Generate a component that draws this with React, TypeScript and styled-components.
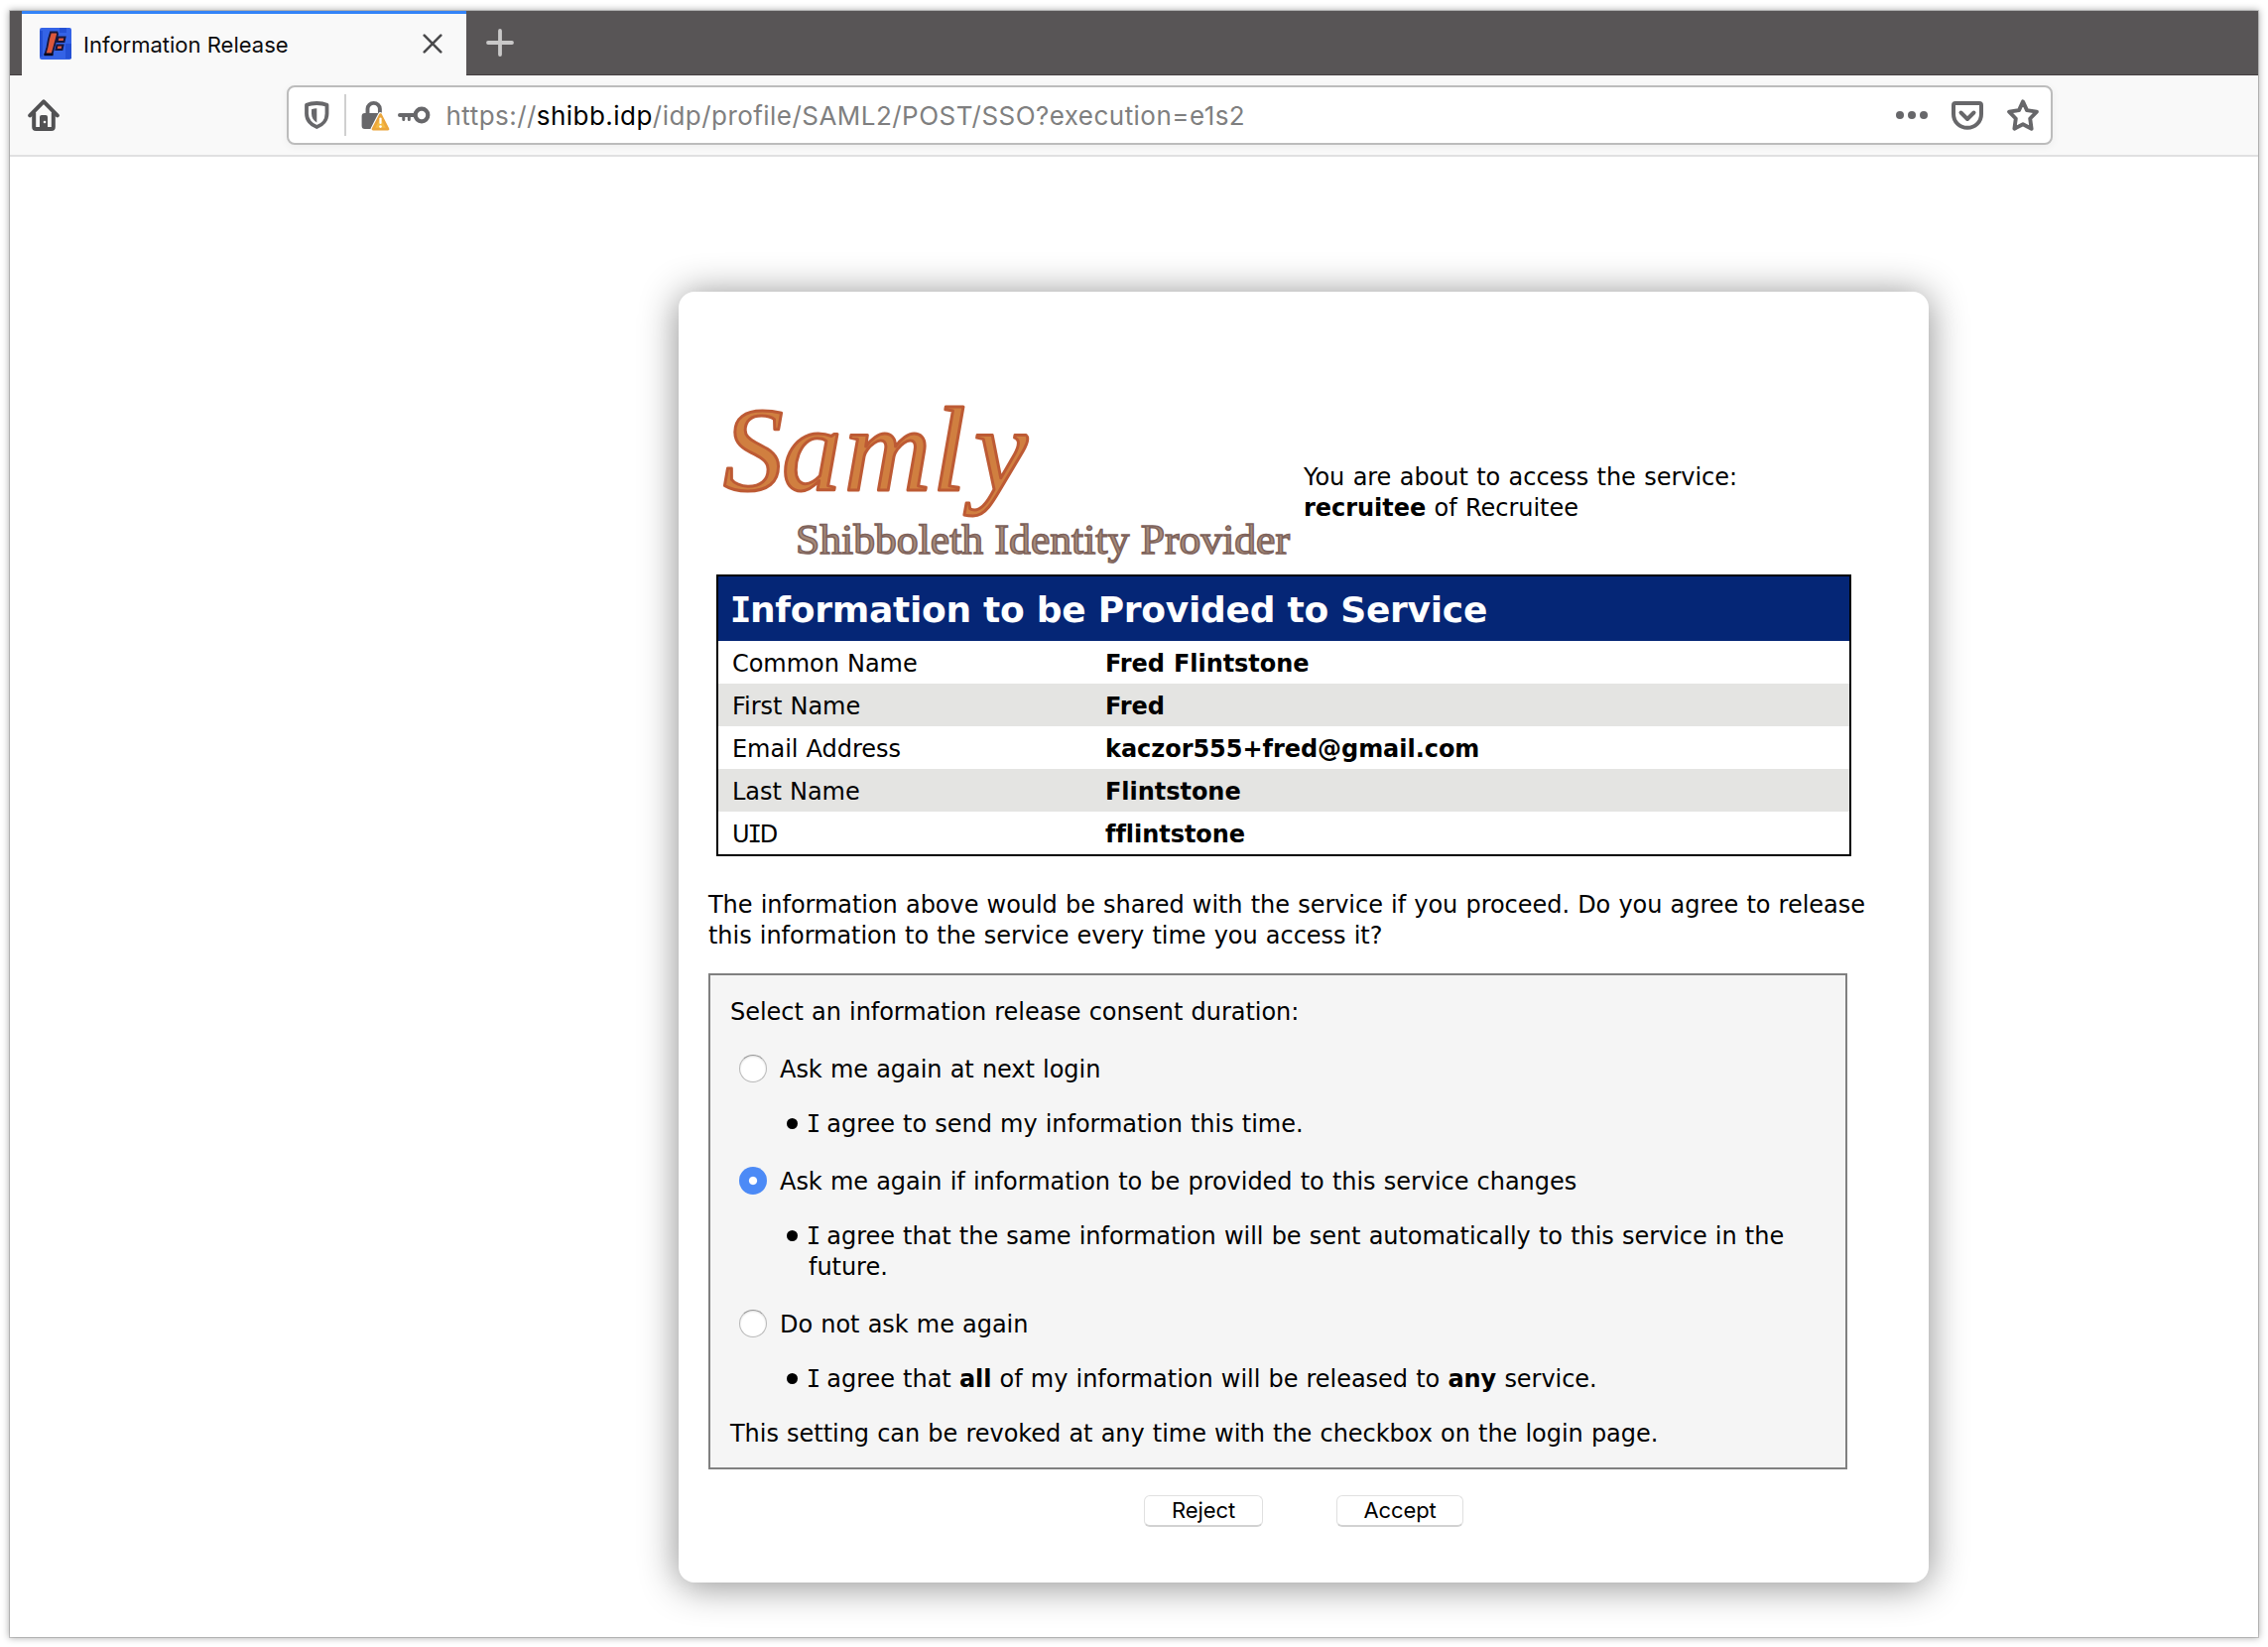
import React, { useState } from "react";
import styled, { createGlobalStyle } from "styled-components";

const GlobalStyle = createGlobalStyle`
  *, *::before, *::after { box-sizing: border-box; }
  body { margin: 0; background: #fff; }
`;

const uiFont = `Inter, "Liberation Sans", sans-serif`;
const pageFont = `"DejaVu Sans", Verdana, sans-serif`;

const Desktop = styled.div`
  padding: 11px 10px 10px;
  background: #fff;
`;

const BrowserWindow = styled.div`
  height: 1639px;
  display: flex;
  flex-direction: column;
  background: #fff;
  box-shadow: 0 0 0 1px rgba(0, 0, 0, 0.16), 0 0 7px 1px rgba(0, 0, 0, 0.32);
`;

const TabStrip = styled.div`
  display: flex;
  height: 65px;
  padding-left: 12px;
  background: #585556;
  box-shadow: inset 0 -1px 0 #453f41;
`;

const Tab = styled.div`
  display: flex;
  align-items: center;
  width: 448px;
  padding: 0 24px 2px 18px;
  border-top: 3px solid #3484f8;
  background: #f9f9f9;
`;

const TabTitle = styled.span`
  flex: 1;
  margin-left: 12px;
  padding-top: 2px;
  font: 400 22px/28px ${uiFont};
  color: #0c0c0d;
`;

const IconButton = styled.button`
  display: flex;
  padding: 0;
  border: 0;
  background: none;
  color: #5b5b5d;
`;

const NewTabButton = styled(IconButton)`
  align-self: center;
  margin: -1px 0 0 20px;
  color: #c9c8c8;
`;

const Toolbar = styled.div`
  display: flex;
  align-items: flex-start;
  height: 82px;
  padding: 10px 0 0 18px;
  border-bottom: 2px solid #e0e0e1;
  background: #f9f9f9;
`;

const HomeButton = styled(IconButton)`
  margin: 14px 229px 0 0;
  color: #515153;
`;

const AddressBar = styled.div`
  display: flex;
  align-items: center;
  width: 1780px;
  height: 60px;
  padding: 0 12px 0 16px;
  border: 2px solid #bcbcbc;
  border-radius: 8px;
  background: #fff;
  color: #67676a;
  box-shadow: 0 2px 8px rgba(0, 0, 0, 0.05);
`;

const Divider = styled.span`
  width: 2px;
  height: 42px;
  margin: 0 15px;
  background: #d0d0d0;
`;

const Url = styled.span`
  flex: 1;
  margin-left: 15.5px;
  padding-top: 2px;
  font: 400 26px/32px ${uiFont};
  letter-spacing: 0.46px;
  color: #7f7f80;
`;

const UrlHost = styled.span`
  color: #000;
`;

const PageActions = styled.div`
  display: flex;
  align-items: center;
  gap: 24px;
`;

const Page = styled.main`
  flex: 1;
  padding: 136px 0 0 674px;
`;

const Card = styled.section`
  width: 1260px;
  height: 1301px;
  padding: 86px 30px 0;
  border-radius: 16px;
  background: #fff;
  box-shadow: 0 3px 38px rgba(0, 0, 0, 0.46);
  font: 400 24px/31px ${pageFont};
  letter-spacing: -0.04px;
  word-spacing: 0.6px;
  color: #000;
`;

const CardHeader = styled.header`
  display: flex;
  align-items: flex-start;
  height: 199px;
  padding-left: 8px;
`;

const Service = styled.p`
  margin: 86px 0 0 8px;
  word-spacing: 0.8px;
`;

const AttributeTable = styled.div`
  width: 1144px;
  margin-left: 8px;
  border: 2px solid #000;
`;

const TableTitle = styled.h2`
  height: 65px;
  margin: 0;
  padding: 13px 13px 0;
  background: #052676;
  font-size: 36px;
  line-height: 42px;
  letter-spacing: -0.26px;
  word-spacing: 0;
  color: #fff;
`;

const AttributeRow = styled.div`
  display: grid;
  grid-template-columns: 376px 1fr;
  height: 43px;
  padding: 8px 13px 0 14px;

  &:nth-child(odd) {
    background: #e4e4e2;
  }
`;

const Capital = styled.span`
  margin: 0 -0.09em;
  font-family: "DejaVu Sans Mono", monospace;

  h2 & {
    margin: 0 -0.035em;
  }
`;

const Question = styled.p`
  width: 1190px;
  margin: 34px 0 22px;
`;

const ConsentBox = styled.div`
  width: 1148px;
  padding: 22px 20px 18px;
  border: 2px solid #808080;
  background: #f5f5f5;
`;

const Line = styled.p`
  margin: 0;
`;

const Option = styled.label`
  display: flex;
  margin: 27px 0 0 9px;
`;

const Radio = styled.input`
  appearance: none;
  width: 28px;
  height: 28px;
  margin: 0 13px 0 0;
  border: 1px solid #b9b9b9;
  border-top-color: #979797;
  border-radius: 50%;
  background: #fff;
  box-shadow: inset 0 1px 2px rgba(0, 0, 0, 0.12);

  &:checked {
    border: 0;
    background: radial-gradient(circle, #fff 3.6px, #4c8af6 4.6px);
    box-shadow: none;
  }
`;

const Notes = styled.ul`
  margin: 24px 0;
  padding: 0;
  list-style: none;
`;

const Note = styled.li`
  display: flex;
  width: 1090px;
  padding-left: 57px;

  &::before {
    content: "";
    flex: none;
    width: 11px;
    height: 11px;
    margin: 9px 11px 0 0;
    border-radius: 50%;
    background: #000;
  }
`;

const Actions = styled.div`
  display: flex;
  gap: 74px;
  margin: 26px 0 0 439px;
`;

const ActionButton = styled.button<{ $width: number }>`
  width: ${(p) => p.$width}px;
  height: 32px;
  padding: 0 0 1px;
  border: 1px solid #e0e0e0;
  border-bottom: 2px solid #d2d2d2;
  border-radius: 6px;
  background: #fff;
  font: 400 22px/28px ${uiFont};
  letter-spacing: -0.1px;
  color: #000;
`;

const Favicon = () => (
  <svg width="32" height="32" viewBox="0 0 32 32">
    <rect width="32" height="32" rx="2" fill="#3463e6" />
    <path d="M0 3h3v26H0zM26 16h6v15h-6zM20 0h7v5h-7z" fill="#2450d4" />
    <path
      d="M18.500 9.500h7l-1 4.500h-7zM17.500 17.500h6l-1 4.500h-6z"
      fill="#db573b"
      stroke="#16163c"
      strokeWidth="2"
    />
    <path d="M11 4.500h6.500l.5 2-5.500 20H5.500l2-7 1.500-8z" fill="#db573b" stroke="#16163c" strokeWidth="1.800" />
    <path d="M4.500 27h9" stroke="#08081c" strokeWidth="2.400" />
  </svg>
);

const CloseIcon = () => (
  <svg width="20" height="20" viewBox="0 0 20 20" fill="none" stroke="#4a4a4c" strokeWidth="2.6" strokeLinecap="round">
    <path d="M1.7 1.7l16.6 16.6M18.3 1.7L1.7 18.3" />
  </svg>
);

const PlusIcon = () => (
  <svg width="28" height="28" viewBox="0 0 28 28" fill="none" stroke="currentColor" strokeWidth="3.8" strokeLinecap="round">
    <path d="M14 2v24M2 14h24" />
  </svg>
);

const HomeIcon = () => (
  <svg width="32" height="32" viewBox="0 0 32 32" fill="none" stroke="currentColor" strokeWidth="4" strokeLinecap="round" strokeLinejoin="round">
    <path d="M2.2 16.4L16 2.4l13.8 14" />
    <path d="M6.2 14v14q0 2 2 2h15.6q2 0 2-2V14" />
    <path d="M12 30V18q0-2 2-2h4q2 0 2 2v12z" fill="currentColor" stroke="none" />
    <circle cx="17" cy="23" r="1.3" fill="#f9f9f9" stroke="none" />
  </svg>
);

const ShieldIcon = () => (
  <svg width="25" height="28" viewBox="0 0 25 28">
    <path
      d="M12.3 2c3.8 0 7.4.6 10.2 1.8v8.6c0 6.4-4.3 11.6-10.2 13.6C6.400 24 2 18.800 2 12.400V3.800C4.800 2.600 8.500 2 12.300 2z"
      fill="none"
      stroke="currentColor"
      strokeWidth="3.8"
      strokeLinejoin="round"
    />
    <path d="M7 8.200c1.600-.6 3.400-.9 5.300-1v14.300C8.800 19.500 7 16 7 12.400z" fill="currentColor" />
  </svg>
);

const LockWarningIcon = () => (
  <svg width="30" height="32" viewBox="0 0 30 32">
    <path d="M6.500 16V9.800a6.200 5.900 0 0 1 12.400 0V15" fill="none" stroke="currentColor" strokeWidth="3.9" />
    <rect x="0.600" y="14" width="21" height="16" rx="3" fill="currentColor" />
    <path d="M19.500 15.600l7.500 14.500H12z" fill="#fff" stroke="#fff" strokeWidth="5" strokeLinejoin="round" />
    <path d="M19.500 15.600l7.500 14.500H12z" fill="#f6bb42" stroke="#eba63c" strokeWidth="2.800" strokeLinejoin="round" />
    <path d="M19.500 19.500v4.500" stroke="#fff" strokeWidth="2.200" strokeLinecap="round" />
    <circle cx="19.500" cy="27.600" r="1.300" fill="#fff" />
  </svg>
);

const KeyIcon = styled((props: { className?: string }) => (
  <svg {...props} width="33" height="18" viewBox="0 0 33 18" fill="none" stroke="currentColor">
    <circle cx="24" cy="9" r="6.300" strokeWidth="4.200" />
    <path d="M2 9h15" strokeWidth="4" strokeLinecap="round" />
    <path d="M5.800 10v3.600M11.300 10v3.600" strokeWidth="3" strokeLinecap="round" />
  </svg>
))`
  margin-left: 7px;
`;

const DotsIcon = () => (
  <svg width="32" height="8" viewBox="0 0 32 8" fill="currentColor">
    <circle cx="4" cy="4" r="4" />
    <circle cx="16" cy="4" r="4" />
    <circle cx="28" cy="4" r="4" />
  </svg>
);

const PocketIcon = () => (
  <svg width="32" height="29" viewBox="0 0 32 29" fill="none" stroke="currentColor" strokeWidth="4" strokeLinecap="round" strokeLinejoin="round">
    <path d="M4 2h24q2 0 2 2v9c0 8-6.300 13.800-14 13.800S2 21 2 13V4q0-2 2-2z" />
    <path d="M9.500 11.500l6.500 6.500 6.500-6.500" />
  </svg>
);

const StarIcon = () => (
  <svg width="32" height="32" viewBox="0 0 32 32" fill="none" stroke="currentColor" strokeWidth="3.900" strokeLinejoin="round">
    <path d="M16 2.400l4 8.700 9.900 1.500-6.700 6.900 1.400 10.200L16 25.200l-8.600 4.500 1.400-10.200-6.700-6.900 9.900-1.500z" />
  </svg>
);

const Logo = () => (
  <svg width="584" height="192" viewBox="722 380 584 192">
    <g
      fontFamily="'Liberation Serif', serif"
      fontStyle="italic"
      fontSize="121"
      fill="#d07f40"
      stroke="#bd5a34"
      strokeWidth="3"
      strokeLinejoin="round"
    >
      <text x="729 788 851 940 982" y="493.500">
        Samly
      </text>
    </g>
    <text
      x="802"
      y="557.500"
      fontFamily="'Liberation Serif', serif"
      fontSize="42"
      fill="#a58a79"
      stroke="#7d625b"
      strokeWidth="1.500"
      textLength="498"
      lengthAdjust="spacingAndGlyphs"
    >
      Shibboleth Identity Provider
    </text>
  </svg>
);

const attributes: { label: React.ReactNode; value: string }[] = [
  { label: "Common Name", value: "Fred Flintstone" },
  { label: "First Name", value: "Fred" },
  { label: "Email Address", value: "kaczor555+fred@gmail.com" },
  { label: "Last Name", value: "Flintstone" },
  { label: <>U<Capital>I</Capital>D</>, value: "fflintstone" },
];

const options: { id: string; label: string; note: React.ReactNode }[] = [
  {
    id: "once",
    label: "Ask me again at next login",
    note: <><Capital>I</Capital> agree to send my information this time.</>,
  },
  {
    id: "changes",
    label: "Ask me again if information to be provided to this service changes",
    note: <><Capital>I</Capital> agree that the same information will be sent automatically to this service in the future.</>,
  },
  {
    id: "always",
    label: "Do not ask me again",
    note: <><Capital>I</Capital> agree that <b>all</b> of my information will be released to <b>any</b> service.</>,
  },
];

export default function App() {
  const [choice, setChoice] = useState("changes");
  return (
    <Desktop>
      <GlobalStyle />
      <BrowserWindow>
        <TabStrip>
          <Tab>
            <Favicon />
            <TabTitle>Information Release</TabTitle>
            <IconButton aria-label="Close tab"><CloseIcon /></IconButton>
          </Tab>
          <NewTabButton aria-label="New tab"><PlusIcon /></NewTabButton>
        </TabStrip>
        <Toolbar>
          <HomeButton aria-label="Home"><HomeIcon /></HomeButton>
          <AddressBar>
            <ShieldIcon />
            <Divider />
            <LockWarningIcon />
            <KeyIcon />
            <Url>
              https://<UrlHost>shibb.idp</UrlHost>/idp/profile/SAML2/POST/SSO?execution=e1s2
            </Url>
            <PageActions>
              <DotsIcon />
              <PocketIcon />
              <StarIcon />
            </PageActions>
          </AddressBar>
        </Toolbar>
        <Page>
          <Card>
            <CardHeader>
              <Logo />
              <Service>
                You are about to access the service:
                <br />
                <b>recruitee</b> of Recruitee
              </Service>
            </CardHeader>
            <AttributeTable>
              <TableTitle>
                <Capital>I</Capital>nformation to be Provided to Service
              </TableTitle>
              {attributes.map((a) => (
                <AttributeRow key={a.value}>
                  <span>{a.label}</span>
                  <b>{a.value}</b>
                </AttributeRow>
              ))}
            </AttributeTable>
            <Question>
              The information above would be shared with the service if you proceed. Do you agree to release this
              information to the service every time you access it?
            </Question>
            <ConsentBox>
              <Line>Select an information release consent duration:</Line>
              {options.map((o) => (
                <React.Fragment key={o.id}>
                  <Option>
                    <Radio type="radio" name="consent" checked={choice === o.id} onChange={() => setChoice(o.id)} />
                    {o.label}
                  </Option>
                  <Notes>
                    <Note><span>{o.note}</span></Note>
                  </Notes>
                </React.Fragment>
              ))}
              <Line>This setting can be revoked at any time with the checkbox on the login page.</Line>
            </ConsentBox>
            <Actions>
              <ActionButton $width={120}>Reject</ActionButton>
              <ActionButton $width={128}>Accept</ActionButton>
            </Actions>
          </Card>
        </Page>
      </BrowserWindow>
    </Desktop>
  );
}
